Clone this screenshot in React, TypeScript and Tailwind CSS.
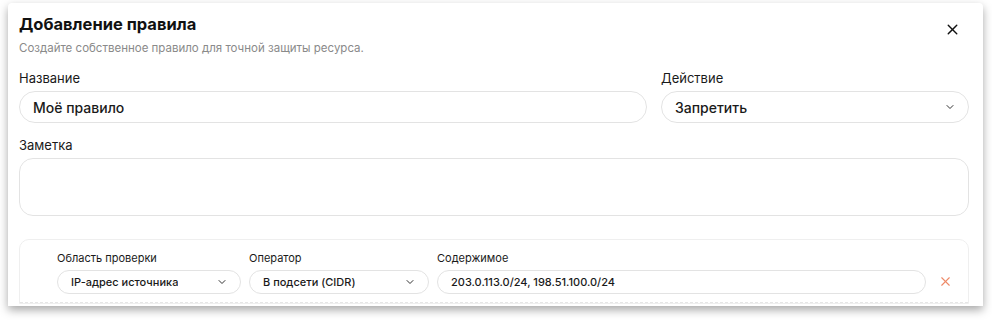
import { X, ChevronDown } from "lucide-react"

const font = { fontFamily: "Inter, 'Noto Sans', sans-serif" }

function Pill({ children, chevron, className }: { children: React.ReactNode; chevron?: boolean; className?: string }) {
  return (
    <div className={`flex items-center justify-between rounded-full border border-[#e3e3e3] bg-white ${className ?? ""}`}>
      <span className="truncate">{children}</span>
      {chevron && <ChevronDown className="h-3 w-3 shrink-0 text-[#333]" strokeWidth={2} />}
    </div>
  )
}

export default function App() {
  return (
    <div className="h-[321px] w-full overflow-hidden bg-white pt-[3px]" style={font}>
      <div className="ml-[8px] h-[303px] w-[975px] overflow-hidden rounded-t-[4px] bg-white shadow-[0_4px_10px_rgba(0,0,0,0.35)]">
        <div className="pl-[11px] pr-[14px] pt-[11px]">
          {/* header */}
          <div className="flex items-start justify-between">
            <div>
              <h2 className="text-[16.5px] font-bold leading-[20px] text-[#111]">Добавление правила</h2>
              <p className="mt-[7px] text-[11.5px] leading-[14px] text-[#8a8a8a]">
                Создайте собственное правило для точной защиты ресурса.
              </p>
            </div>
            <button className="mr-[8px] mt-[7px] text-[#111]">
              <X className="h-[17px] w-[17px]" strokeWidth={2} />
            </button>
          </div>

          {/* name + action */}
          <div className="mt-[15px] grid grid-cols-[1fr_308px] gap-[14px]">
            <div>
              <label className="block text-[13px] leading-[16px] text-[#1a1a1a]">Название</label>
              <Pill className="mt-[5px] h-[32px] px-[13px] text-[14px] font-medium text-[#1a1a1a]">Моё правило</Pill>
            </div>
            <div>
              <label className="block text-[13px] leading-[16px] text-[#1a1a1a]">Действие</label>
              <Pill chevron className="mt-[5px] h-[32px] border-[#d9d9d9] pl-[13px] pr-[12px] text-[14px] font-medium text-[#1a1a1a]">
                Запретить
              </Pill>
            </div>
          </div>

          {/* note */}
          <div className="mt-[14px]">
            <label className="block text-[13px] leading-[16px] text-[#1a1a1a]">Заметка</label>
            <div className="mt-[5px] h-[58px] rounded-[14px] border border-[#e3e3e3] bg-white" />
          </div>

          {/* rule card */}
          <div className="mt-[23px] rounded-t-[10px] border border-[#efefef] bg-white">
            <div className="flex items-end pl-[37px] pr-[15px] pt-[11px]">
              <div className="w-[184px]">
                <div className="text-[11px] leading-[14px] text-[#1a1a1a]">Область проверки</div>
                <Pill chevron className="mt-[5px] h-[24px] pl-[13px] pr-[12px] text-[11px] font-medium text-[#1a1a1a]">
                  IP-адрес источника
                </Pill>
              </div>
              <div className="ml-[8px] w-[180px]">
                <div className="text-[11px] leading-[14px] text-[#1a1a1a]">Оператор</div>
                <Pill chevron className="mt-[5px] h-[24px] pl-[13px] pr-[12px] text-[11px] font-medium text-[#1a1a1a]">
                  В подсети (CIDR)
                </Pill>
              </div>
              <div className="ml-[8px] flex-1">
                <div className="text-[11px] leading-[14px] text-[#1a1a1a]">Содержимое</div>
                <Pill className="mt-[5px] h-[24px] pl-[13px] pr-[12px] text-[11px] font-medium text-[#1a1a1a]">
                  203.0.113.0/24, 198.51.100.0/24
                </Pill>
              </div>
              <button className="mb-[5px] ml-[12px] text-[#ee8a68]">
                <X className="h-[15px] w-[15px]" strokeWidth={1.8} />
              </button>
            </div>
            <div className="mt-[8px] border-t border-dashed border-[#e6e6e6]" />
          </div>
        </div>
      </div>
    </div>
  )
}
